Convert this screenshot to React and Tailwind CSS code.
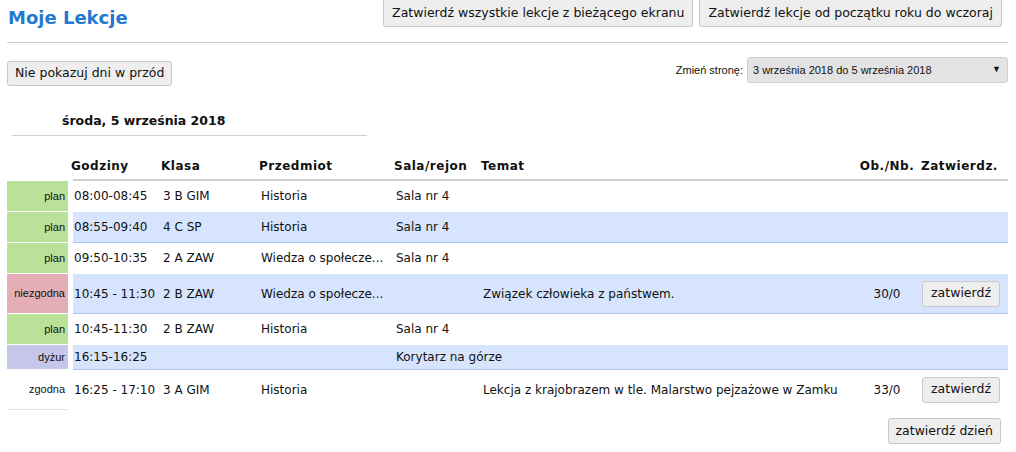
import React from 'react';

const rows = [
  { status: 'plan', statusBg: 'bg-[#b9e298]', rowBg: '', border: 'border-white', h: 'h-[30px]', time: '08:00-08:45', klasa: '3 B GIM', przedmiot: 'Historia', sala: 'Sala nr 4' },
  { status: 'plan', statusBg: 'bg-[#b9e298]', rowBg: 'bg-[#d6e4fd]', border: 'border-[#a9c3f2]', h: 'h-[30px]', time: '08:55-09:40', klasa: '4 C SP', przedmiot: 'Historia', sala: 'Sala nr 4' },
  { status: 'plan', statusBg: 'bg-[#b9e298]', rowBg: '', border: 'border-white', h: 'h-[30px]', time: '09:50-10:35', klasa: '2 A ZAW', przedmiot: 'Wiedza o społecze...', sala: 'Sala nr 4' },
  { status: 'niezgodna', statusBg: 'bg-[#e5adb5]', rowBg: 'bg-[#d6e4fd]', border: 'border-[#a9c3f2]', h: 'h-[39px]', time: '10:45 - 11:30', klasa: '2 B ZAW', przedmiot: 'Wiedza o społecze...', sala: '', temat: 'Związek człowieka z państwem.', ob: '30/0', btn: true },
  { status: 'plan', statusBg: 'bg-[#b9e298]', rowBg: '', border: 'border-white', h: 'h-[30px]', time: '10:45-11:30', klasa: '2 B ZAW', przedmiot: 'Historia', sala: 'Sala nr 4' },
  { status: 'dyżur', statusBg: 'bg-[#c6c5ea]', rowBg: 'bg-[#d6e4fd]', border: 'border-[#a9c3f2]', h: 'h-[24px]', time: '16:15-16:25', klasa: '', przedmiot: '', sala: 'Korytarz na górze' },
  { status: 'zgodna', statusBg: 'bg-white', rowBg: '', border: 'border-white', h: 'h-[39px]', time: '16:25 - 17:10', klasa: '3 A GIM', przedmiot: 'Historia', sala: '', temat: 'Lekcja z krajobrazem w tle. Malarstwo pejzażowe w Zamku', ob: '33/0', btn: true, last: true },
];

const btn = 'bg-[#eeeeee] border border-[#c8c8c8] rounded-[3px] text-[#111] whitespace-nowrap';

export default function App() {
  return (
    <div className="w-[1016px] h-[452px] bg-white text-[#111] text-[12px] font-['DejaVu_Sans',sans-serif] pl-[7px] pr-[8px]">
      {/* Top */}
      <div className="flex justify-between items-start h-[43px] border-b border-[#cccccc]">
        <h1 className="pt-[6px] pl-[1px] text-[18px] font-bold text-[#2379cf] leading-[24px]">Moje Lekcje</h1>
        <div className="flex gap-[6px] mr-[6px]">
          <button className={`${btn} h-[27px] px-[8px] text-[12.5px] border-t-0 rounded-t-none`}>Zatwierdź wszystkie lekcje z bieżącego ekranu</button>
          <button className={`${btn} h-[27px] px-[8px] text-[12.5px] border-t-0 rounded-t-none`}>Zatwierdź lekcje od początku roku do wczoraj</button>
        </div>
      </div>

      {/* Controls */}
      <div className="flex justify-between items-start mt-[14px]">
        <button className={`${btn} h-[25px] px-[7px] mt-[4px] text-[12.5px]`}>Nie pokazuj dni w przód</button>
        <div className="flex items-center gap-[4px] font-['Liberation_Sans',sans-serif] text-[11px]">
          <span>Zmień stronę:</span>
          <div className="w-[261px] h-[26px] bg-[#e3e3e3] border border-[#cfcfcf] rounded-[3px] flex items-center justify-between pl-[5px] pr-[6px]">
            <span>3 września 2018 do 5 września 2018</span>
            <span className="text-[9px]">▼</span>
          </div>
        </div>
      </div>

      {/* Day heading */}
      <div className="ml-[5px] mt-[26px] w-[355px] border-b border-[#d0d0d0] pl-[50px] pb-[5px] font-bold text-[12.5px] leading-[18px]">
        środa, 5 września 2018
      </div>

      {/* Table header */}
      <div className="flex mt-[21px]">
        <div className="w-[66px]" />
        <div className="flex-1 flex items-end h-[24px] pb-[4px] border-b-2 border-[#d0d0d0] font-bold tracking-[0.5px] text-[12px]">
          <div className="w-[90px] -ml-[2px]">Godziny</div>
          <div className="w-[98px]">Klasa</div>
          <div className="w-[135px]">Przedmiot</div>
          <div className="w-[87px]">Sala/rejon</div>
          <div className="w-[375px]">Temat</div>
          <div className="w-[62px] text-center">Ob./Nb.</div>
          <div className="flex-1 pl-[3px]">Zatwierdz.</div>
        </div>
      </div>

      {/* Rows */}
      <div className="flex flex-col">
        {rows.map((r, i) => (
          <div key={i} className="flex">
            <div className={`w-[61px] ${r.h} ${r.statusBg} border-b ${r.last ? 'border-[#e0e0e0]' : 'border-white'} box-content flex items-center justify-end font-['Liberation_Sans',sans-serif] text-[11px]`}>
              <span className="pr-[3px]">{r.status}</span>
            </div>
            <div className="w-[5px]" />
            <div className={`flex-1 ${r.h} box-content ${r.rowBg} border-b ${r.border} flex items-center pl-[1px] text-[12px]`}>
              <div className="w-[89px] whitespace-nowrap">{r.time}</div>
              <div className="w-[98px] whitespace-nowrap">{r.klasa}</div>
              <div className="w-[135px] whitespace-nowrap">{r.przedmiot}</div>
              <div className="w-[87px] whitespace-nowrap">{r.sala}</div>
              <div className="w-[373px] whitespace-nowrap">{r.temat}</div>
              <div className="w-[62px] text-center">{r.ob}</div>
              <div className="flex-1 pl-[4px]">
                {r.btn && <button className={`${btn} h-[26px] w-[78px] text-[12.5px]`}>zatwierdź</button>}
              </div>
            </div>
          </div>
        ))}
      </div>

      <div className="flex justify-end mt-[8px] mr-[7px]">
        <button className={`${btn} h-[26px] px-[7px] text-[12.5px]`}>zatwierdź dzień</button>
      </div>
    </div>
  );
}
